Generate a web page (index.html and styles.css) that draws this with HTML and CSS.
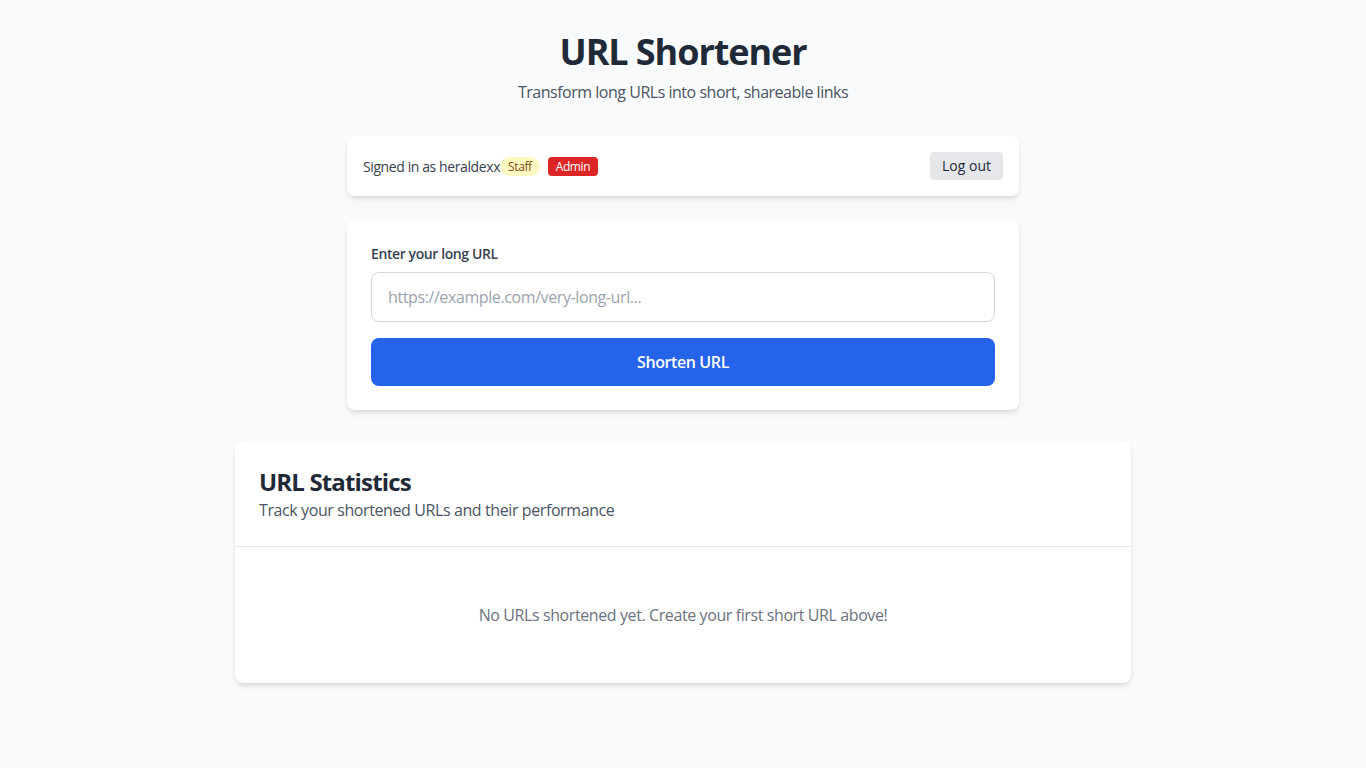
FILE: index.html
```html
<!DOCTYPE html>
<html lang="en">
<head>
<meta charset="utf-8">
<title>URL Shortener</title>
<link rel="stylesheet" href="styles.css">
</head>
<body>
<div class="page">
  <header class="hero">
    <h1 class="hero-title">URL Shortener</h1>
    <p class="hero-sub">Transform long URLs into short, shareable links</p>
  </header>

  <div class="narrow">
    <div class="card user-card">
      <div class="user-info">
        <span class="user-text">Signed in as heraldexx</span>
        <span class="badge badge-staff">Staff</span>
        <span class="badge badge-admin">Admin</span>
      </div>
      <button class="btn-logout">Log out</button>
    </div>

    <form class="card form-card">
      <label class="form-label" for="url">Enter your long URL</label>
      <input class="form-input" id="url" type="text" placeholder="https://example.com/very-long-url...">
      <button class="btn-primary" type="button">Shorten URL</button>
    </form>
  </div>

  <section class="card stats-card">
    <div class="stats-head">
      <h2 class="stats-title">URL Statistics</h2>
      <p class="stats-sub">Track your shortened URLs and their performance</p>
    </div>
    <div class="stats-empty">
      <p>No URLs shortened yet. Create your first short URL above!</p>
    </div>
  </section>
</div>
</body>
</html>
```

FILE: styles.css
```css
* { box-sizing: border-box; }
html, body { margin: 0; padding: 0; }
body {
  background: #f9fafb;
  font-family: "Open Sans", "Noto Sans", sans-serif;
  letter-spacing: -0.025em;
  color: #1f2937;
}
.page {
  padding: 32px 16px;
  display: flex;
  flex-direction: column;
  align-items: center;
}
.hero { text-align: center; margin-bottom: 32px; }
.hero-title {
  margin: 0 0 8px;
  font-size: 36px;
  line-height: 40px;
  font-weight: 700;
  letter-spacing: -0.03em;
  color: #1f2937;
}
.hero-sub {
  margin: 0;
  font-size: 16px;
  line-height: 24px;
  letter-spacing: -0.03em;
  color: #4b5563;
}
.narrow {
  width: 672px;
  display: flex;
  flex-direction: column;
  gap: 24px;
  margin-bottom: 32px;
}
.card {
  background: #fff;
  border-radius: 8px;
  box-shadow: 0 4px 6px -1px rgba(0,0,0,0.1), 0 2px 4px -2px rgba(0,0,0,0.1);
}
.user-card {
  padding: 16px;
  display: flex;
  align-items: center;
  justify-content: space-between;
}
.user-info {
  display: flex;
  align-items: center;
  font-size: 14px;
  color: #374151;
}
.badge {
  font-size: 12px;
  line-height: 17px;
  padding: 1px 8px;
}
.badge-staff {
  background: #fef9c3;
  color: #854d0e;
  border-radius: 9999px;
}
.badge-admin {
  background: #dc2626;
  color: #fff;
  border-radius: 4px;
  margin-left: 8px;
}
.btn-logout {
  font-family: inherit;
  letter-spacing: 0;
  font-size: 14px;
  line-height: 20px;
  padding: 4px 12px;
  border: 0;
  border-radius: 4px;
  background: #e5e7eb;
  color: #1f2937;
}
.form-card {
  margin: 0;
  padding: 24px;
  display: flex;
  flex-direction: column;
}
.form-label {
  font-size: 14px;
  line-height: 20px;
  font-weight: 600;
  color: #374151;
  margin-bottom: 8px;
}
.form-input {
  height: 50px;
  padding: 12px 16px;
  font-family: inherit;
  letter-spacing: inherit;
  font-size: 16px;
  border: 1px solid #d1d5db;
  border-radius: 8px;
  color: #1f2937;
  margin-bottom: 16px;
}
.form-input::placeholder { color: #9ca3af; }
.btn-primary {
  height: 48px;
  border: 0;
  border-radius: 8px;
  background: #2563eb;
  color: #fff;
  font-family: inherit;
  letter-spacing: inherit;
  font-size: 16px;
  font-weight: 600;
}
.stats-card {
  width: 896px;
  overflow: hidden;
}
.stats-head {
  padding: 24px;
  border-bottom: 1px solid #e5e7eb;
}
.stats-title {
  margin: 0;
  font-size: 24px;
  line-height: 32px;
  font-weight: 700;
  letter-spacing: -0.035em;
  color: #1f2937;
}
.stats-sub {
  margin: 0;
  font-size: 16px;
  line-height: 24px;
  color: #4b5563;
}
.stats-empty {
  padding: 56px 24px;
  text-align: center;
}
.stats-empty p {
  margin: 0;
  font-size: 16px;
  line-height: 24px;
  color: #6b7280;
}
```
